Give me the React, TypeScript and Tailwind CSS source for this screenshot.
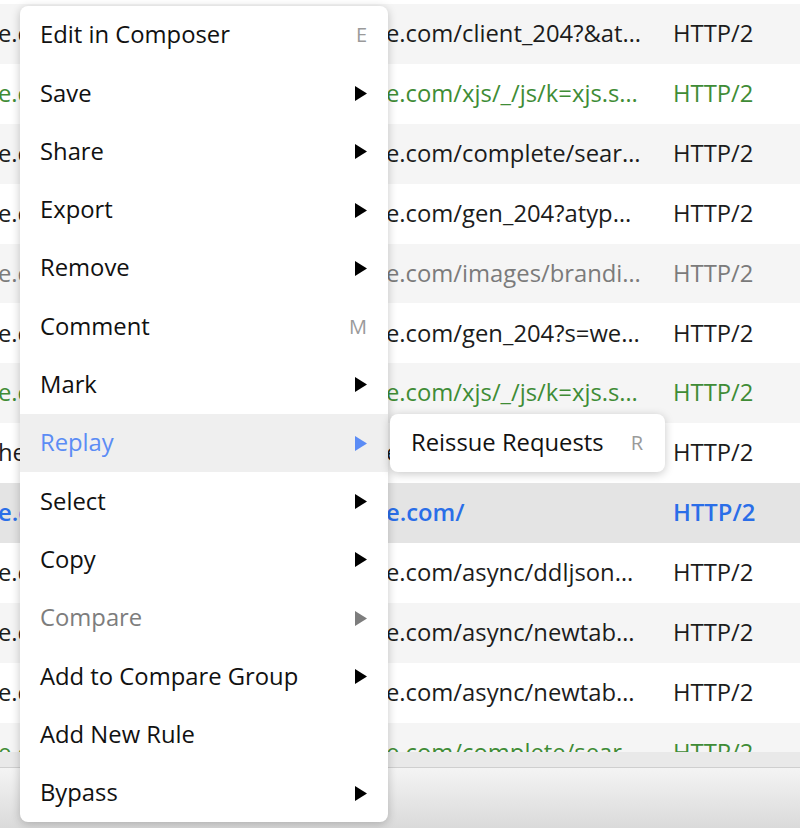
import React from 'react';

type Tone = 'black' | 'green' | 'gray' | 'blue';

const rows: { left: string; url: string; tone: Tone }[] = [
  { left: 'e.c', url: 'e.com/client_204?&at…', tone: 'black' },
  { left: 'e.c', url: 'e.com/xjs/_/js/k=xjs.s…', tone: 'green' },
  { left: 'e.c', url: 'e.com/complete/sear…', tone: 'black' },
  { left: 'e.c', url: 'e.com/gen_204?atyp…', tone: 'black' },
  { left: 'e.c', url: 'e.com/images/brandi…', tone: 'gray' },
  { left: 'e.c', url: 'e.com/gen_204?s=we…', tone: 'black' },
  { left: 'e.c', url: 'e.com/xjs/_/js/k=xjs.s…', tone: 'green' },
  { left: 'her', url: 'e.com/async/hpba…', tone: 'black' },
  { left: 'e.c', url: 'e.com/', tone: 'blue' },
  { left: 'e.c', url: 'e.com/async/ddljson…', tone: 'black' },
  { left: 'e.c', url: 'e.com/async/newtab…', tone: 'black' },
  { left: 'e.c', url: 'e.com/async/newtab…', tone: 'black' },
  { left: 'e.c', url: 'e.com/complete/sear…', tone: 'green' },
];

const toneClass: Record<Tone, string> = {
  black: 'text-[#1c1c1c]',
  green: 'text-[#3f8c36]',
  gray: 'text-[#7b7b7b]',
  blue: 'text-[#2a6ee8] font-semibold',
};

type Item = { label: string; kind: 'sub' | 'key' | 'none'; key?: string; state?: 'active' | 'disabled' };

const items: Item[] = [
  { label: 'Edit in Composer', kind: 'key', key: 'E' },
  { label: 'Save', kind: 'sub' },
  { label: 'Share', kind: 'sub' },
  { label: 'Export', kind: 'sub' },
  { label: 'Remove', kind: 'sub' },
  { label: 'Comment', kind: 'key', key: 'M' },
  { label: 'Mark', kind: 'sub' },
  { label: 'Replay', kind: 'sub', state: 'active' },
  { label: 'Select', kind: 'sub' },
  { label: 'Copy', kind: 'sub' },
  { label: 'Compare', kind: 'sub', state: 'disabled' },
  { label: 'Add to Compare Group', kind: 'sub' },
  { label: 'Add New Rule', kind: 'none' },
  { label: 'Bypass', kind: 'sub' },
];

function Arrow({ color }: { color: string }) {
  return (
    <svg width="12" height="15" viewBox="0 0 12 15">
      <path d="M0 0 L12 7.5 L0 15 Z" fill={color} />
    </svg>
  );
}

function MenuItem({ item }: { item: Item }) {
  const active = item.state === 'active';
  const disabled = item.state === 'disabled';
  const text = active ? 'text-[#5b8cf5]' : disabled ? 'text-[#7d7d7d]' : 'text-[#111]';
  return (
    <div
      className={`flex h-[58.3px] items-center justify-between pl-[20px] pr-[21px] ${active ? 'bg-[#efefef]' : ''}`}
    >
      <span className={text}>{item.label}</span>
      {item.kind === 'sub' && (
        <Arrow color={active ? '#5b8cf5' : disabled ? '#7d7d7d' : '#000'} />
      )}
      {item.kind === 'key' && <span className="text-[20px] text-[#9a9a9a]">{item.key}</span>}
    </div>
  );
}

export default function App() {
  return (
    <div
      className="relative flex h-[828px] w-[800px] flex-col overflow-hidden bg-white text-[23.8px]"
      style={{ fontFamily: '"Open Sans", "Noto Sans", sans-serif' }}
    >
      <div className="h-[752px] overflow-hidden pt-[4px]">
        {rows.map((row, i) => {
          const bg = row.tone === 'blue' ? 'bg-[#e4e4e4]' : i % 2 === 0 ? 'bg-[#f5f5f5]' : 'bg-white';
          return (
            <div key={i} className={`flex h-[59.9px] items-center whitespace-nowrap ${bg} ${toneClass[row.tone]}`}>
              <div className="ml-[-2px] w-[388px] overflow-hidden">{row.left}</div>
              <div className="w-[287px] overflow-hidden">{row.url}</div>
              <div>HTTP/2</div>
            </div>
          );
        })}
      </div>
      <div className="h-[16px] border-b border-[#cfcfcf] bg-[#e9e9e9]" />
      <div className="flex-1 bg-gradient-to-b from-[#f4f4f4] to-[#dadada]" />

      <div className="absolute left-[20px] top-[6px] w-[368px] overflow-hidden rounded-[8px] bg-white shadow-[0_2px_10px_rgba(0,0,0,0.22)]">
        {items.map((item) => (
          <MenuItem key={item.label} item={item} />
        ))}
      </div>

      <div className="absolute left-[390px] top-[414px] flex h-[58px] w-[275px] items-center justify-between rounded-[8px] bg-white pl-[21px] pr-[22px] shadow-[0_2px_10px_rgba(0,0,0,0.22)]">
        <span className="text-[#111]">Reissue Requests</span>
        <span className="text-[20px] text-[#9a9a9a]">R</span>
      </div>
    </div>
  );
}
